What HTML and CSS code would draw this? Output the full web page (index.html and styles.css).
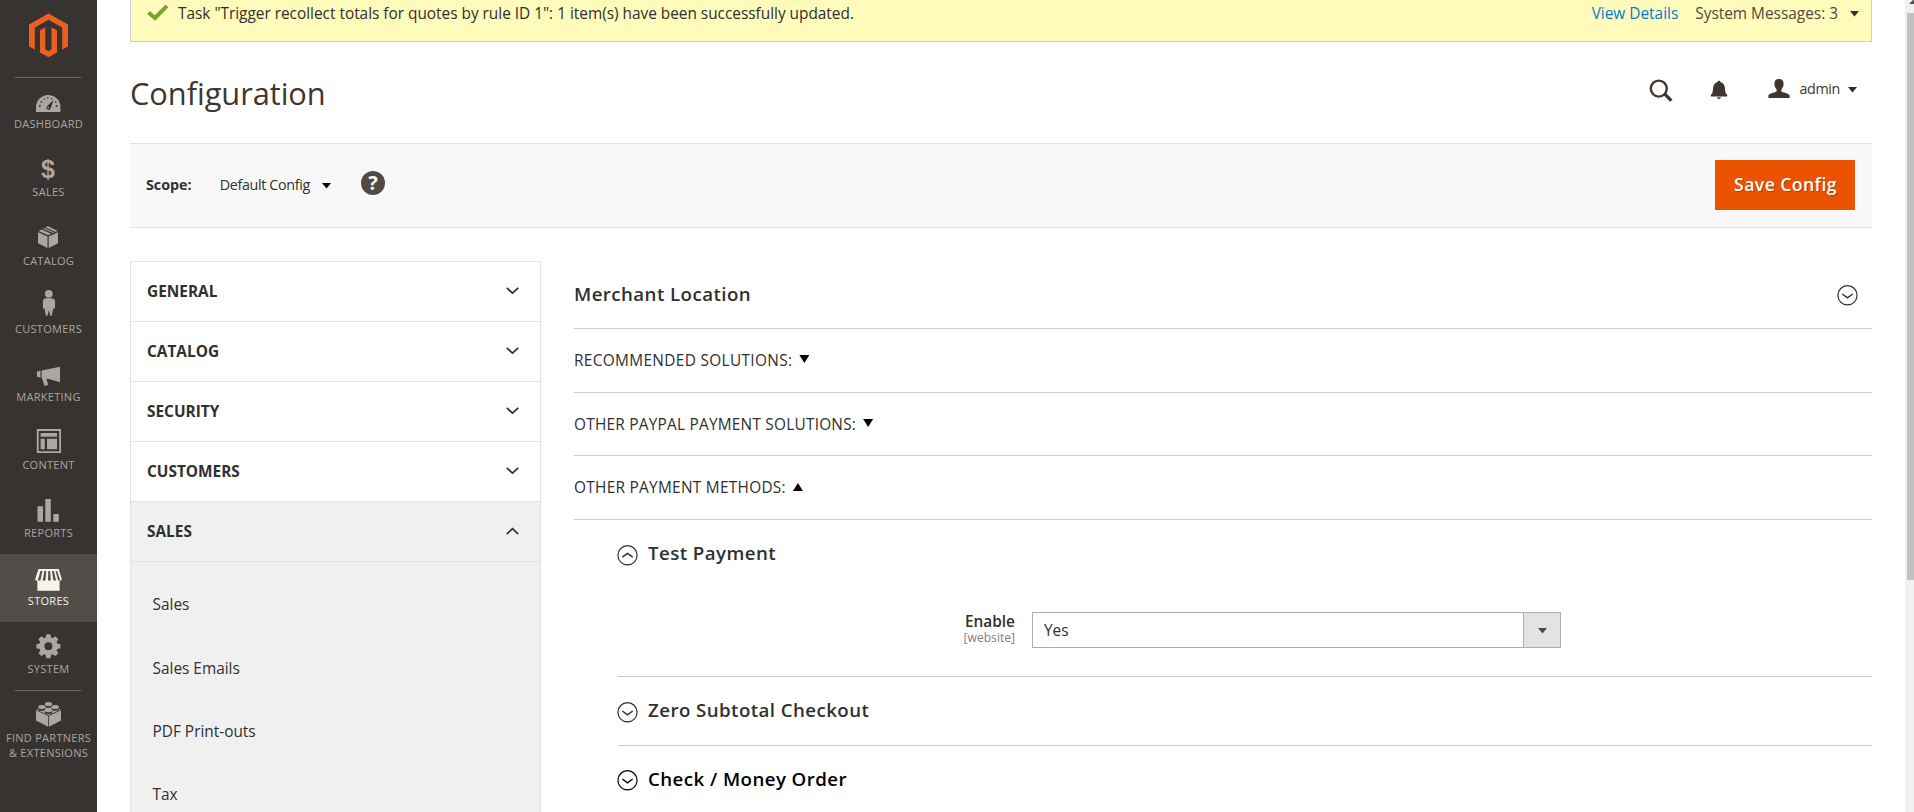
FILE: index.html
```html
<!DOCTYPE html>
<html lang="en">
<head>
<meta charset="utf-8">
<title>Configuration</title>
<link rel="stylesheet" href="styles.css">
</head>
<body>
<svg class="defs" width="0" height="0">
  <symbol id="down" viewBox="0 0 13 8"><path d="M0.8 0.9 6.5 6.2 12.2 0.9" fill="none" stroke="currentColor" stroke-width="1.7"/></symbol>
  <symbol id="up" viewBox="0 0 13 8"><path d="M0.8 7.1 6.5 1.6 12.2 7.1" fill="none" stroke="currentColor" stroke-width="1.7"/></symbol>
  <symbol id="caret" viewBox="0 0 9 6"><path d="M0 0H9L4.5 5.6Z" fill="currentColor"/></symbol>
  <symbol id="circle-down" viewBox="0 0 21 21"><g fill="none" stroke="currentColor" stroke-width="1.2"><circle cx="10.5" cy="10.3" r="9.6"/><path d="M5.3 9 10.5 12.8 15.7 9" stroke-width="1.5"/></g></symbol>
  <symbol id="circle-up" viewBox="0 0 21 21"><g fill="none" stroke="currentColor" stroke-width="1.2"><circle cx="10.5" cy="10.3" r="9.6"/><path d="M5.3 12.2 10.5 8.4 15.7 12.2" stroke-width="1.5"/></g></symbol>
</svg>
<div class="page">
  <nav class="menu">
    <a class="logo"><svg width="40" height="45" viewBox="0 0 40 45"><path fill="#eb5f23" d="M19.5 0.5 39 11.4V33.6L33.2 36.6V14.4L19.5 6.8 5.8 14.4V36.6L0 33.6V11.4ZM16.3 14.2V36.2L19.5 38.2 22.5 36.2V14.2L28 17.3V39.4L19.5 44.3 11 39.4V17.3Z"/></svg></a>
    <ul class="menu-list">
      <li class="item"><svg class="mi" viewBox="0 0 49 32"><path fill="currentColor" d="M12 28V23A12.2 12 0 0 1 36.4 23V28Z"/><g fill="#373330"><circle cx="15.8" cy="22" r="1"/><circle cx="17.3" cy="17.8" r=".9"/><circle cx="20" cy="15" r=".8"/><circle cx="23.8" cy="13.8" r=".8"/><circle cx="27.6" cy="14.6" r=".8"/><circle cx="32.6" cy="22" r="1"/><circle cx="31.6" cy="18" r=".8"/><path d="M29.5 15.8 26.6 24.6A2.2 2.2 0 1 1 22.8 22.4Z"/></g><circle cx="24.3" cy="23.6" r=".8" fill="currentColor"/></svg><span>Dashboard</span></li>
      <li class="item"><svg class="mi" viewBox="0 0 49 32"><text class="dollar" x="24" y="26" text-anchor="middle">$</text></svg><span>Sales</span></li>
      <li class="item low"><svg class="mi" viewBox="0 0 49 32"><g fill="currentColor"><path d="M14 12.2 23.5 16.5V28L14 23.2ZM34 12.2 24.7 16.5V28L34 23.2ZM14.6 11 17.6 9.4 27.2 13.8 24.3 15.2ZM19 8.8 23.8 6 33.6 11 29 13 Z"/></g><path d="M20.5 7.4 31 12.3" stroke="#373330" stroke-width="1.1"/></svg><span>Catalog</span></li>
      <li class="item low"><svg class="mi" viewBox="0 0 49 32"><g fill="currentColor"><circle cx="24.8" cy="5.8" r="3.9"/><path d="M21.8 10.2H27.8Q31 10.6 31 13.6V20.5H29.2L27.8 27.8H26.2L24.9 22 23.4 27.8H21.8L20.5 20.5H18.9V13.6Q19 10.6 21.8 10.2Z"/></g></svg><span>Customers</span></li>
      <li class="item low"><svg class="mi" viewBox="0 0 49 32"><path fill="currentColor" d="M13 15.6 16.5 14.8V21.6L13 20.8ZM17.6 14.6 36 10.8V26.2L24 22.8 22.4 23 24.2 28.8 20.6 30 18 22 17.6 21.8Z"/></svg><span>Marketing</span></li>
      <li class="item low"><svg class="mi" viewBox="0 0 49 32"><path fill="currentColor" fill-rule="evenodd" d="M12.8 5H37V29H12.8ZM14.7 7V27.2H35.2V7ZM16.6 9H33V12.8H16.6ZM16.6 14.8H20.8V25.3H16.6ZM23 14.8H33V25.3H23Z"/></svg><span>Content</span></li>
      <li class="item low"><svg class="mi" viewBox="0 0 49 32"><path fill="currentColor" d="M13.5 14.3H19V29.8H13.5ZM21.3 7H26.8V29.8H21.3ZM29.3 22H34.8V29.8H29.3Z"/></svg><span>Reports</span></li>
      <li class="item low active"><svg class="mi" viewBox="0 0 49 32"><path fill="currentColor" d="M14.5 9H34.7L37.8 19Q37.6 21 35.6 21V30.8H13.4V21Q11.4 21 11.2 19Z"/><g fill="#524d49"><path d="M16.4 11H18.4L16.4 20.4H13.8ZM20.4 11H22.3L21.4 20.4H18.7ZM24.3 11H26.1L26.8 20.4H24ZM28 11H29.8L32 20.4H29.4Z"/><path d="M31.6 11H33.2L36.2 20.4H34.2Z"/></g></svg><span>Stores</span></li>
      <li class="item low"><svg class="mi" viewBox="0 0 49 32"><g transform="translate(24.4 18.2)" fill="currentColor"><path id="tooth" d="M-3-8-2-12H2L3-8V8L2 12H-2L-3 8Z"/><use href="#tooth" transform="rotate(45)"/><use href="#tooth" transform="rotate(90)"/><use href="#tooth" transform="rotate(135)"/><circle r="9"/><circle r="3.9" fill="#373330"/></g></svg><span>System</span></li>
      <li class="item partners"><svg class="mi" viewBox="0 0 49 32"><path fill="currentColor" d="M12 12.3 24.1 18V28.8L12 22.4ZM37 12.3 24.9 18V28.8L37 22.4ZM12.2 11.4 24.5 5.4 36.8 11.4 24.5 17.2Z"/><g fill="#373330"><ellipse cx="24.5" cy="7.8" rx="3.9" ry="2"/><ellipse cx="17.8" cy="10.8" rx="3.9" ry="2"/><ellipse cx="31.2" cy="10.8" rx="3.9" ry="2"/><ellipse cx="24.5" cy="14" rx="3.9" ry="2"/></g><g fill="currentColor"><ellipse cx="24.5" cy="6" rx="3.7" ry="2"/><ellipse cx="17.8" cy="9" rx="3.7" ry="2"/><ellipse cx="31.2" cy="9" rx="3.7" ry="2"/><ellipse cx="24.5" cy="12.2" rx="3.7" ry="2"/></g></svg><span>Find Partners<br>&amp; Extensions</span></li>
    </ul>
  </nav>
  <main class="main">
    <div class="notice">
      <svg class="check" viewBox="0 0 22 17"><path d="M1.5 8.5 8 14 20 1.8" fill="none" stroke="#79a22e" stroke-width="4"/></svg>
      <span class="notice-text">Task "Trigger recollect totals for quotes by rule ID 1": 1 item(s) have been successfully updated.</span>
      <a class="details">View Details</a>
      <span class="sysmsg">System Messages: 3</span>
      <svg class="caret"><use href="#caret"/></svg>
    </div>
    <header class="header">
      <h1>Configuration</h1>
      <svg class="search" viewBox="0 0 24 24"><circle cx="9.8" cy="9.6" r="8" fill="none" stroke="currentColor" stroke-width="2.4"/><path d="M15.4 14.6 22.3 21.6" stroke="currentColor" stroke-width="3.4"/></svg>
      <svg class="bell" viewBox="0 0 18 20"><path fill="currentColor" d="M9 0.8Q10.3 0.8 10.5 2 15 3.4 15 9.4 15.2 13.6 17.2 15V16.4H.8V15Q2.8 13.6 3 9.4 3 3.4 7.5 2 7.7.8 9 .8ZM7 17.3H11Q10.6 19 9 19 7.4 19 7 17.3Z"/></svg>
      <svg class="user" viewBox="0 0 22 20"><path fill="currentColor" d="M11 0C14.3 0 15.6 1.8 15.6 4.6 15.6 7.4 14.6 9.2 13.4 10.4V12.6C16 14 21.6 14.4 21.6 16.8V19H.4V16.8C.4 14.4 6 14 8.6 12.6V10.4C7.4 9.2 6.4 7.4 6.4 4.6 6.4 1.8 7.7 0 11 0Z"/></svg>
      <span class="admin">admin</span>
      <svg class="caret"><use href="#caret"/></svg>
    </header>
    <div class="scope">
      <b class="scope-label">Scope:</b>
      <span class="scope-value">Default Config</span>
      <svg class="caret black"><use href="#caret"/></svg>
      <span class="help">?</span>
      <button class="save">Save Config</button>
    </div>
    <div class="columns">
      <aside class="tabs">
        <div class="tab"><span>General</span><svg><use href="#down"/></svg></div>
        <div class="tab"><span>Catalog</span><svg><use href="#down"/></svg></div>
        <div class="tab"><span>Security</span><svg><use href="#down"/></svg></div>
        <div class="tab"><span>Customers</span><svg><use href="#down"/></svg></div>
        <div class="tab open"><span>Sales</span><svg><use href="#up"/></svg></div>
        <ul class="subtabs"><li>Sales</li><li>Sales Emails</li><li>PDF Print-outs</li><li>Tax</li></ul>
      </aside>
      <section class="content">
        <div class="merchant"><h2>Merchant Location</h2><svg class="circ"><use href="#circle-down"/></svg></div>
        <div class="group g1"><span>Recommended Solutions:</span><i class="tri-down"></i></div>
        <div class="group g2"><span>Other PayPal Payment Solutions:</span><i class="tri-down"></i></div>
        <div class="group g3"><span>Other Payment Methods:</span><i class="tri-up"></i></div>
        <div class="nested">
          <div class="method test"><svg class="circ"><use href="#circle-up"/></svg><h2>Test Payment</h2></div>
          <div class="field">
            <label class="label"><b>Enable</b><small>[website]</small></label>
            <div class="select"><span>Yes</span><i><svg class="caret"><use href="#caret"/></svg></i></div>
          </div>
          <div class="method zero"><svg class="circ"><use href="#circle-down"/></svg><h2>Zero Subtotal Checkout</h2></div>
          <div class="method money"><svg class="circ"><use href="#circle-down"/></svg><h2>Check / Money Order</h2></div>
        </div>
      </section>
    </div>
  </main>
  <div class="scrollbar"><svg width="7" height="13"><path d="M2 4 7 -1V4Z" fill="#505050"/></svg><div class="thumb"></div></div>
</div>
</body>
</html>
```
FILE: styles.css
```css
* { box-sizing: border-box; }
html, body { margin: 0; height: 812px; overflow: hidden; }
body { background: #fff; color: #303030; font-family: "Open Sans", "Noto Sans", sans-serif; font-size: 15.4px; }
h1, h2, ul { margin: 0; padding: 0; list-style: none; }
svg { display: block; flex: none; }
.defs { display: none; }
.page { display: flex; height: 812px; overflow: hidden; }

.menu { width: 97px; flex: none; background: #373330; color: #aaa6a0; }
.logo { display: flex; height: 77px; padding: 13px 0 0 29px; }
.menu-list::before { content: ""; display: block; height: 1px; margin: 0 16px 0 15px; background: #736963; }
.item { height: 68px; padding-top: 6px; display: flex; flex-direction: column; align-items: center; font-size: 11px; line-height: 15px; letter-spacing: .28px; text-transform: uppercase; text-align: center; white-space: nowrap; }
.item.low span { margin-top: 1px; }
.item.active { background: #524d49; color: #f7f3eb; }
.mi { width: 49px; height: 32px; }
.dollar { font: bold 25px "Liberation Sans", sans-serif; fill: currentColor; }
.partners { height: 90px; }
.partners::before { content: ""; width: 66px; height: 1px; margin: -6px 1px 7px 0; background: #736963; flex: none; }

.main { width: 1742px; margin-left: 33px; flex: none; }
.caret { width: 9px; height: 6px; }
.notice { height: 42px; display: flex; align-items: flex-start; padding: 3px 12px 0 16px; background: #fffbbb; border: 1px solid #ccc; border-top: 0; line-height: 22px; }
.check { width: 22px; height: 17px; margin: 1px 9px 0 0; }
.notice-text { flex: 1; letter-spacing: -.012px; }
.details { color: #007bdb; margin-right: 17px; }
.sysmsg { color: #514943; }
.notice .caret { margin: 8px 0 0 12px; }
.notice .caret, .header .caret { color: #303030; }
.header { height: 101px; display: flex; align-items: flex-start; padding: 37px 15px 0 0; color: #41362f; }
h1 { flex: 1; height: 60px; margin-top: -16px; font-size: 30.8px; font-weight: 400; line-height: 60px; letter-spacing: -.06px; }
.search { width: 24px; height: 24px; margin-right: 37px; }
.bell { width: 18px; height: 20px; margin: 1px 40px 0 0; }
.user { width: 22px; height: 20px; margin-right: 9px; }
.admin { font-size: 14.3px; line-height: 20px; letter-spacing: -.35px; color: #41362f; }
.header .caret { margin: 8px 0 0 8px; }
.scope { height: 85px; background: #f8f8f8; border: solid #e3e3e3; border-width: 1px 0; display: flex; align-items: flex-start; padding: 16px 17px 0 16px; font-size: 14.3px; line-height: 50px; }
.scope-label { margin-right: 28px; }
.scope-value { margin-right: 12px; letter-spacing: -.33px; }
.caret.black { color: #000; margin-top: 23px; }
.help { width: 24px; height: 24px; margin: 11px auto 0 30px; border-radius: 50%; background: #514943; color: #f8f8f8; font: 700 20px/24px "Open Sans", sans-serif; text-align: center; }
.save { width: 140px; height: 50px; padding: 0 0 2px 1px; border: 0; background: #eb5202; color: #fff; font: 600 17.6px/48px "Open Sans", sans-serif; letter-spacing: .44px; text-shadow: 1px 1px 0 rgba(0,0,0,.25); }

.columns { display: flex; padding-top: 33px; }
.tabs { width: 411px; height: 560px; border: 1px solid #e3e3e3; background: #fff; }
.tab { height: 60px; display: flex; justify-content: space-between; align-items: flex-start; padding: 19px 21px 0 16px; border-bottom: 1px solid #e3e3e3; font-weight: 700; font-size: 15.4px; line-height: 22px; text-transform: uppercase; }
.tab svg { width: 13px; height: 8px; margin-top: 6px; }
.tab.open, .subtabs { background: #f0f0f0; }
.subtabs { height: 260px; padding: 11px 0 0 21.5px; }
.subtabs li { height: 63.3px; line-height: 63.3px; }
.subtabs li:nth-child(2) { padding-top: 1px; }
.content { width: 1298px; margin-left: 33px; }
h2 { font-size: 18.7px; font-weight: 600; line-height: 26px; letter-spacing: .43px; }
.merchant { height: 68px; padding: 20px 14px 0 0; display: flex; justify-content: space-between; align-items: flex-start; border-bottom: 1px solid #ccc; }
.circ { width: 21px; height: 21px; }
.merchant .circ { margin-top: 4px; }
.group { height: 64px; display: flex; align-items: flex-start; padding-top: 21px; border-bottom: 1px solid #ccc; line-height: 22px; text-transform: uppercase; }
.g1 { letter-spacing: .34px; }
.g2 { height: 63px; letter-spacing: .23px; }
.g3 { letter-spacing: .28px; }
.tri-down, .tri-up { width: 10px; height: 8px; margin: 5px 0 0 7px; background: #000; clip-path: polygon(0 0, 100% 0, 50% 100%); }
.tri-up { margin-top: 6px; clip-path: polygon(50% 0, 100% 100%, 0 100%); }
.nested { margin-left: 44px; }
.method { display: flex; align-items: flex-start; border-bottom: 1px solid #ccc; }
.method .circ { margin: 5px 10px 0 -1px; }
.test { height: 92px; padding-top: 20px; border: 0; }
.field { display: flex; height: 65px; border-bottom: 1px solid #ccc; }
.label { width: 397px; padding-top: 1px; display: flex; flex-direction: column; align-items: flex-end; margin-right: 17px; }
.label b { font-weight: 600; line-height: 18px; }
.label small { font-size: 12.1px; line-height: 14px; color: #808080; }
.select { width: 529px; height: 36px; display: flex; justify-content: space-between; border: 1px solid #adadad; line-height: 36px; padding-left: 11px; }
.select i { width: 37px; border-left: 1px solid #adadad; background: #e3e3e3; color: #514943; padding: 15px 0 0 14px; }
.zero { height: 69px; padding-top: 20px; }
.money { height: 66px; padding-top: 20px; border: 0; color: #000; }
.method.money .circ { margin-top: 4px; }
.scrollbar { width: 9px; margin-left: 33px; padding-left: 2px; background: #f1f1f1; }
.thumb { height: 567px; background: #c1c1c1; }
```
